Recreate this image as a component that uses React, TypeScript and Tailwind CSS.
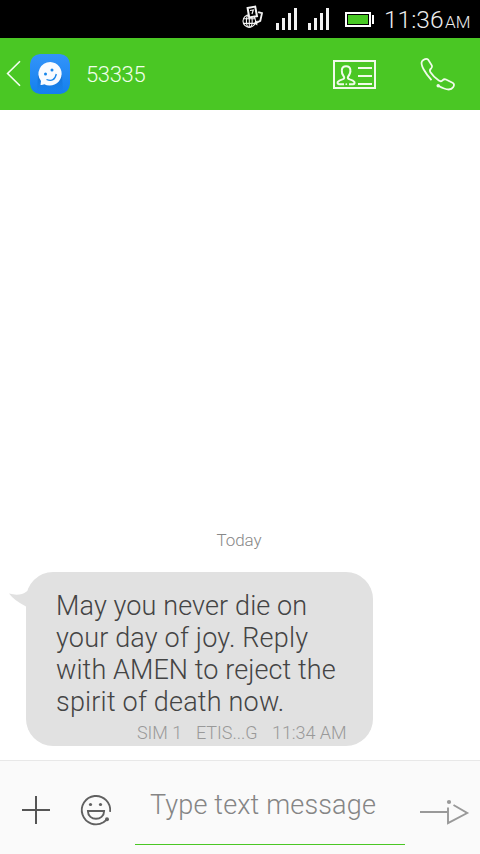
import React from 'react';

function DataIcon() {
  return (
    <svg width="24" height="26" viewBox="0 0 24 26" fill="none" stroke="#f4f4f4" strokeWidth="1.1">
      <circle cx="8.3" cy="17" r="6.3" />
      <ellipse cx="8.3" cy="17" rx="2.9" ry="6.3" />
      <path d="M2 14.8H14.3M2 19.4H14.3M8.3 10.5V23.3" />
      <path d="M14 19.5L19.3 16.8L21 9.2L17.2 8.2" strokeWidth="1.8" />
      <path d="M13 19.3L16.3 16.3V21.5Z" fill="#f4f4f4" stroke="none" />
      <path d="M6.6 4L14.2 2.6L16 12.2L8.2 13.4Z" fill="#000" strokeWidth="2" />
      <path d="M9 6.5L12.3 6L11 10" strokeWidth="1.2" />
    </svg>
  );
}

function Signal() {
  return (
    <div className="flex h-[22px] w-[21px] items-end gap-[3px]">
      <i className="h-[7px] w-[3px] bg-[#f2f2f2]" />
      <i className="h-[12px] w-[3px] bg-[#f2f2f2]" />
      <i className="h-[17px] w-[3px] bg-[#f2f2f2]" />
      <i className="h-[22px] w-[3px] bg-[#f2f2f2]" />
    </div>
  );
}

function StatusBar() {
  return (
    <div className="flex h-[38px] shrink-0 items-start bg-black pl-[241px] text-[#eee]">
      <div className="mt-[4px] w-[35px]"><DataIcon /></div>
      <div className="mt-[8px] w-[32px]"><Signal /></div>
      <div className="mt-[8px] w-[37px]"><Signal /></div>
      <div className="mt-[12px] flex w-[39px] items-center">
        <div className="h-[15px] w-[26px] border-2 border-white p-px">
          <div className="h-full bg-[#48c824]" />
        </div>
        <i className="ml-px h-[9px] w-[2px] bg-white" />
      </div>
      <div className="mt-[5px] flex items-baseline whitespace-nowrap leading-[30px]">
        <span className="w-[61px] text-[24.5px]">11:36</span>
        <span className="text-[17px]">AM</span>
      </div>
    </div>
  );
}

function Avatar() {
  return (
    <svg width="40" height="40" viewBox="0 0 40 40">
      <defs>
        <linearGradient id="avatar" x1="0" y1="0" x2="0" y2="1">
          <stop stopColor="#3394fa" /><stop offset="1" stopColor="#1480ed" />
        </linearGradient>
        <linearGradient id="shade" x1="0" y1="0" x2="0" y2="1">
          <stop stopColor="#0b67c8" /><stop offset="1" stopColor="#0b67c8" stopOpacity="0" />
        </linearGradient>
      </defs>
      <path d="M10 0Q20 -.4 30 0Q39 1 40 10Q40.4 20 40 30Q39 39 30 40Q20 40.4 10 40Q1 39 0 30Q-.4 20 0 10Q1 1 10 0Z" fill="url(#avatar)" />
      <path d="M8 21L7 37H33L32 21Z" fill="url(#shade)" opacity=".65" />
      <path d="M20.3 8A11.8 11.8 0 1 1 14.3 30.2Q12.7 31.2 10.5 31L11 27A11.8 11.8 0 0 1 20.3 8Z" fill="#f8fbff" />
      <circle cx="15.5" cy="20" r="1.5" fill="#1685eb" />
      <circle cx="22" cy="16" r="1.5" fill="#1685eb" />
      <path d="M16.5 25.5Q24.5 28.6 26.3 20" fill="none" stroke="#1685eb" strokeWidth="1.3" />
    </svg>
  );
}

function Header() {
  return (
    <header className="flex h-[72px] shrink-0 items-center bg-[#4ac724]">
      <svg width="30" height="30" viewBox="0 0 30 30" fill="none" stroke="#f4fff1" strokeWidth="1.6" className="shrink-0">
        <path d="M20 2.2L7.6 14.5L20 26.7" />
      </svg>
      <Avatar />
      <div className="ml-[16px] w-[246px] text-[22px] leading-[26px] tracking-[-0.35px] text-[#f0ffeb]"><span className="relative top-px">53335</span></div>
      <svg width="46" height="32" viewBox="0 0 46 32" fill="none" stroke="#f0fbea" strokeWidth="2">
        <path d="M2 3H43V30H2Z" />
        <path d="M26 10H40M26 18H40M26 26H40" />
        <path d="M12 26.2H7Q5 26 5.8 23.8Q7 22.3 10.4 21.4Q12.8 20.7 12 18.8C9.8 16 9.5 14.8 9.8 12.4C10.1 7 18.1 7 18.4 12.4C18.7 14.8 18.1 16 16 18.8Q15.2 20.7 17.7 21.4Q21.3 22.3 22.4 24Q23 26.2 21 26.2H17" />
        <circle cx="14.3" cy="26.2" r=".9" fill="#f0fbea" stroke="none" />
      </svg>
      <svg width="44" height="44" viewBox="0 0 44 44" fill="none" stroke="#f0fbea" strokeWidth="1.8" className="ml-[38px]">
        <path d="M15.5 28.1C9.6 21.5 3.8 12.6 6 9.2C7.4 7.3 10.6 6.1 12.1 7.6L15.9 13.6Q16.6 15.2 14.9 16.8Q13.3 17.8 14.3 19.9Q17.8 25.1 22.8 28.6Q24.8 30 26.5 28.3Q28.1 26.7 30 27.5L36.5 30.8Q39.2 32.3 37.1 35.3C34 40.1 26.5 36.2 22.3 33.8" />
        <circle cx="22.2" cy="33.7" r="1.7" fill="#f0fbea" stroke="none" />
      </svg>
    </header>
  );
}

function Message() {
  return (
    <div className="relative ml-[26px] h-[174px] w-[347px] shrink-0 rounded-[27px] bg-[#e1e1e1] pt-[18px]">
      <svg className="absolute left-[-17px] top-[18px]" width="20" height="18" viewBox="0 0 20 18">
        <path d="M0 3.6Q11 6.7 17.5 1.5L20 0V18L17 16.5Q5 10.5 0 3.6Z" fill="#e1e1e1" />
      </svg>
      <p className="ml-[30px] whitespace-nowrap text-[27px] leading-[32px] tracking-[0.12px] text-[#444]">
        <span className="block">May you never die on</span>
        <span className="block tracking-[0.18px]">your day of joy. Reply</span>
        <span className="block tracking-[0.09px]">with AMEN to reject the</span>
        <span className="block tracking-[0.2px]">spirit of death now.</span>
      </p>
      <div className="ml-[111px] mt-[4px] flex whitespace-nowrap text-[18px] leading-[22px] tracking-[-0.05px] text-[#999]">
        <span className="w-[59px]">SIM 1</span>
        <span className="w-[76px]">ETIS...G</span>
        <span>11:34 AM</span>
      </div>
    </div>
  );
}

function Composer() {
  return (
    <footer className="flex h-[94px] shrink-0 border-t border-[#e8e8e8] bg-[#fafafa]">
      <svg className="ml-[20px] mt-[33px] shrink-0" width="32" height="32" viewBox="0 0 32 32" stroke="#555" strokeWidth="2">
        <path d="M2 16H30M16 2V30" />
      </svg>
      <svg className="ml-[27px] mt-[32px] shrink-0" width="34" height="34" viewBox="0 0 34 34" fill="none" stroke="#606060" strokeWidth="1.9">
        <path d="M31.1 18.8A14.2 14.2 0 1 0 24.5 29.2L27 27.2" />
        <circle cx="28" cy="26.2" r="2" fill="#606060" stroke="none" />
        <circle cx="11.5" cy="11.5" r="1.6" fill="#606060" stroke="none" />
        <circle cx="21.5" cy="11.5" r="1.6" fill="#606060" stroke="none" />
        <path d="M8.9 18H25.1C25.1 28.4 8.9 28.4 8.9 18Z" />
      </svg>
      <div className="ml-[22px] h-[84px] w-[270px] shrink-0 border-b border-[#4ac724] pl-[15px] pt-[28px] text-[27px] leading-[32px] tracking-[0.16px] whitespace-nowrap text-[#858585]">Type text message</div>
      <svg className="ml-[13px] mt-[35px] shrink-0" width="54" height="34" viewBox="0 0 54 34" fill="none" stroke="#999" strokeWidth="1.9">
        <path d="M2 16H30M30 11.5V27.2L49.2 17L35.5 9" />
        <circle cx="31" cy="6" r="2.1" fill="#999" stroke="none" />
      </svg>
    </footer>
  );
}

export default function App() {
  return (
    <main className="flex h-[854px] w-[480px] flex-col overflow-hidden bg-white font-['Roboto',sans-serif] font-light">
      <StatusBar />
      <Header />
      <section className="flex flex-1 flex-col justify-end pb-[14px]">
        <div className="mb-[22px] pr-[2px] text-center text-[17px] leading-[20px] tracking-[-0.1px] text-[#888]">Today</div>
        <Message />
      </section>
      <Composer />
    </main>
  );
}
